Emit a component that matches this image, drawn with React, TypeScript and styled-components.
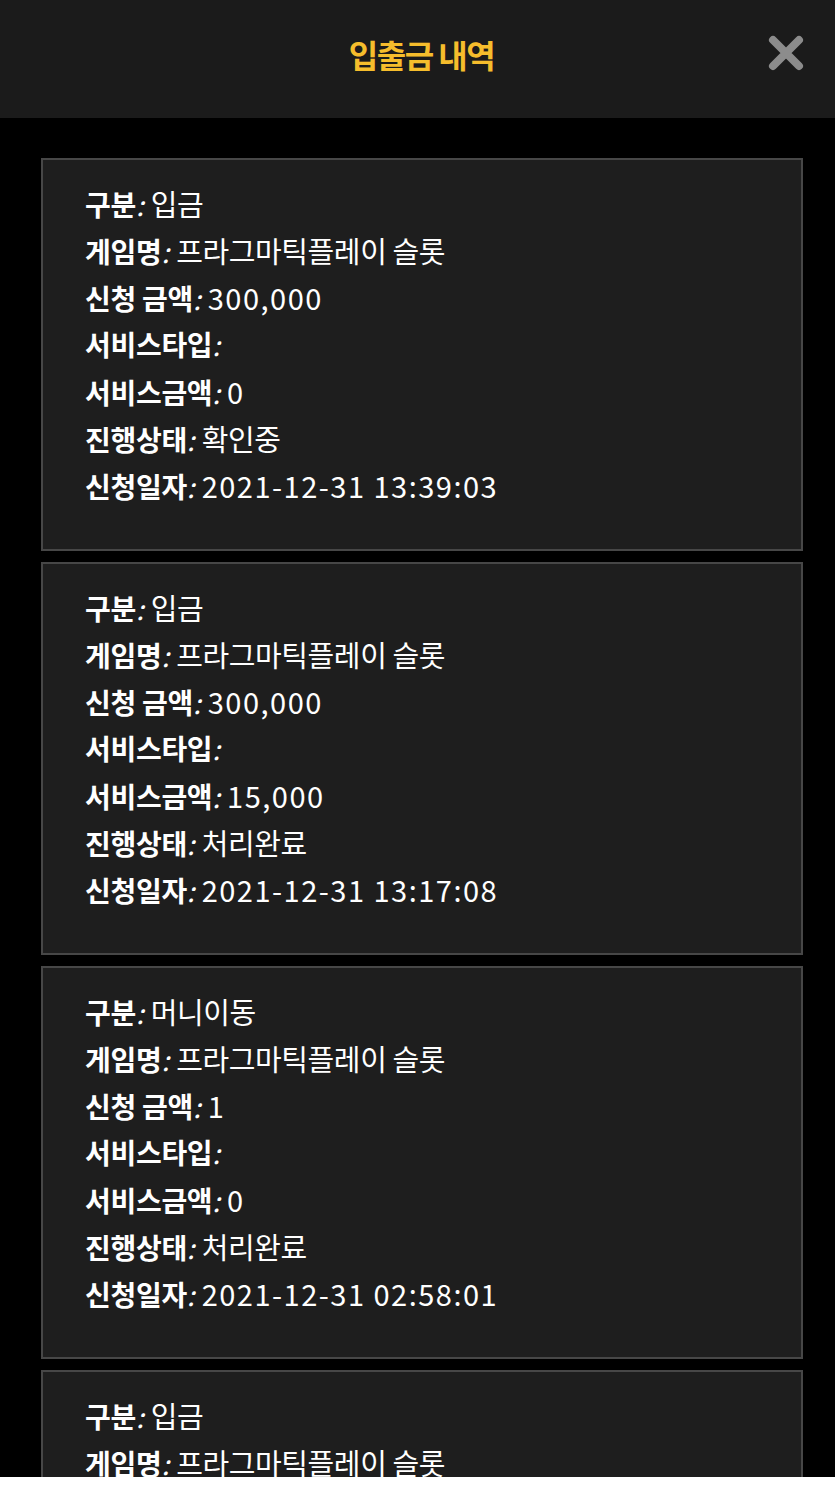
import React, { FC } from "react";
import styled, { createGlobalStyle } from "styled-components";

const GlobalStyle = createGlobalStyle`
  html, body {
    margin: 0;
    padding: 0;
    background: #ffffff;
  }
  body {
    font-family: "Noto Sans CJK KR", "Noto Sans", sans-serif;
  }
`;

const Screen = styled.div`
  height: 1477px;
  overflow: hidden;
  background: #000000;
  display: flex;
  flex-direction: column;
`;

const Header = styled.header`
  flex: none;
  height: 118px;
  background: #1b1b1b;
  display: flex;
  align-items: center;
  justify-content: center;
  position: relative;
`;

const Title = styled.h1`
  margin: 0;
  margin-top: -10px;
  margin-left: 8px;
  color: #f6bd2c;
  font-size: 32px;
  font-weight: 700;
  letter-spacing: -1.5px;
`;

const CloseButton = styled.button`
  position: absolute;
  right: 30px;
  top: 34px;
  width: 38px;
  height: 38px;
  padding: 0;
  border: 0;
  background: transparent;
  cursor: pointer;
  display: flex;
`;

const List = styled.div`
  padding: 40px 32px 0 41px;
  display: flex;
  flex-direction: column;
  gap: 11px;
`;

const Card = styled.div`
  background: #1e1e1e;
  border: 2px solid #474747;
  padding: 20px 40px 40px 42px;
  color: #ffffff;
`;

const Row = styled.div`
  display: flex;
  align-items: baseline;
  height: 47px;
  line-height: 47px;
  font-size: 28px;
  white-space: nowrap;
`;

const Label = styled.span`
  font-weight: 700;
  letter-spacing: -0.3px;
`;

const Colon = styled.i`
  font-weight: 400;
  margin-right: 7px;
`;

const Value = styled.span<{ $digits?: boolean }>`
  font-weight: 400;
  font-size: 29px;
  letter-spacing: ${(p) => (p.$digits ? "1.5px" : "-0.4px")};
`;

type Item = {
  kind: string;
  game: string;
  amount: string;
  serviceType: string;
  serviceAmount: string;
  status: string;
  date: string;
};

const items: Item[] = [
  {
    kind: "입금",
    game: "프라그마틱플레이 슬롯",
    amount: "300,000",
    serviceType: "",
    serviceAmount: "0",
    status: "확인중",
    date: "2021-12-31 13:39:03",
  },
  {
    kind: "입금",
    game: "프라그마틱플레이 슬롯",
    amount: "300,000",
    serviceType: "",
    serviceAmount: "15,000",
    status: "처리완료",
    date: "2021-12-31 13:17:08",
  },
  {
    kind: "머니이동",
    game: "프라그마틱플레이 슬롯",
    amount: "1",
    serviceType: "",
    serviceAmount: "0",
    status: "처리완료",
    date: "2021-12-31 02:58:01",
  },
  {
    kind: "입금",
    game: "프라그마틱플레이 슬롯",
    amount: "300,000",
    serviceType: "",
    serviceAmount: "0",
    status: "확인중",
    date: "2021-12-31 01:12:44",
  },
];

const Field: FC<{ label: string; value: string; digits?: boolean }> = ({
  label,
  value,
  digits,
}) => (
  <Row>
    <Label>{label}</Label>
    <Colon>:</Colon>
    <Value $digits={digits}>{value}</Value>
  </Row>
);

const CloseIcon = () => (
  <svg width="38" height="38" viewBox="0 0 38 38">
    <path
      d="M6 6 L32 32 M32 6 L6 32"
      stroke="#8c8c8c"
      strokeWidth="8"
      strokeLinecap="round"
    />
  </svg>
);

const App: FC = () => {
  return (
    <>
      <GlobalStyle />
      <Screen>
        <Header>
          <Title>입출금 내역</Title>
          <CloseButton aria-label="닫기">
            <CloseIcon />
          </CloseButton>
        </Header>
        <List>
          {items.map((it, i) => (
            <Card key={i}>
              <Field label="구분" value={it.kind} />
              <Field label="게임명" value={it.game} />
              <Field label="신청 금액" value={it.amount} digits />
              <Field label="서비스타입" value={it.serviceType} />
              <Field label="서비스금액" value={it.serviceAmount} digits />
              <Field label="진행상태" value={it.status} />
              <Field label="신청일자" value={it.date} digits />
            </Card>
          ))}
        </List>
      </Screen>
    </>
  );
};

export default App;
